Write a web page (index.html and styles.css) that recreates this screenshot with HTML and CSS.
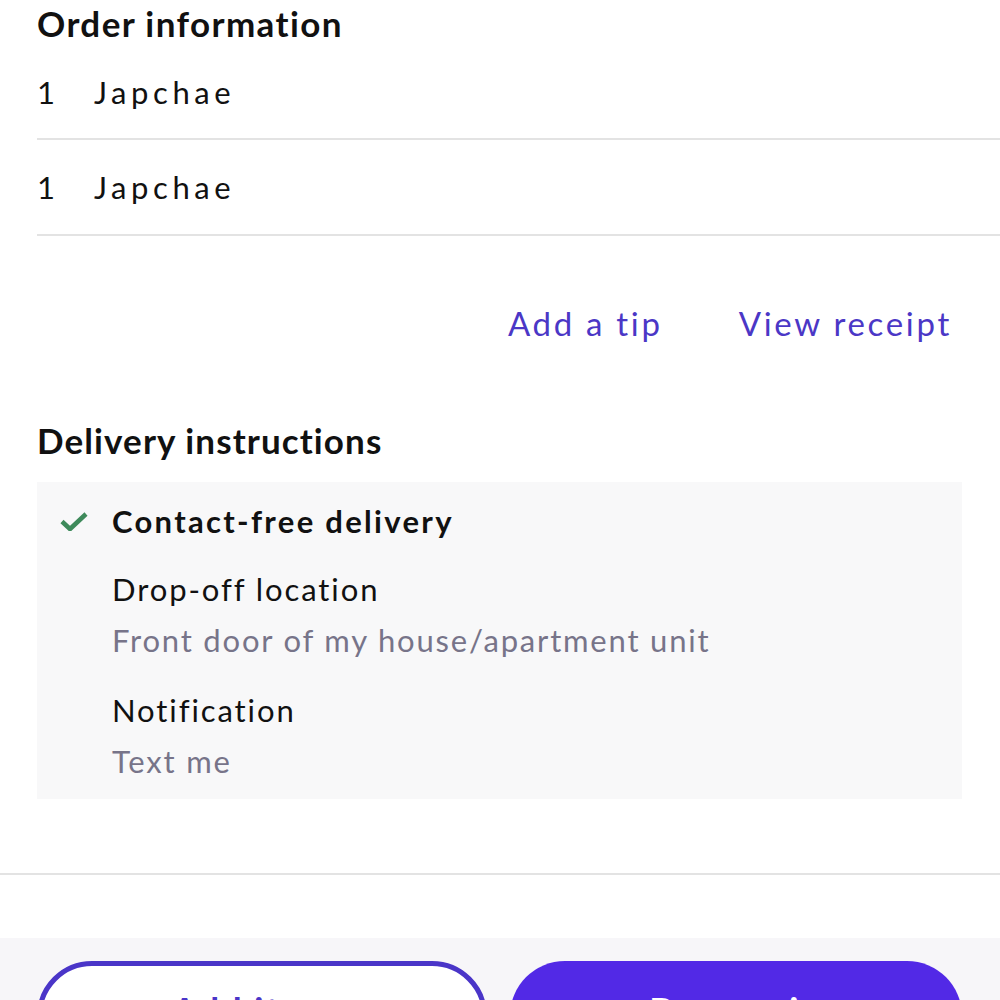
FILE: index.html
```html
<!DOCTYPE html>
<html lang="en">

<head>
  <meta charset="UTF-8">
  <meta name="viewport" content="width=device-width, initial-scale=1.0">
  <title>Order details</title>
  <link rel="stylesheet" href="styles.css">
</head>

<body>

  <div class="page">

    <section class="order">
      <h2 class="title">Order information</h2>
      <div class="item">
        <span class="qty">1</span>
        <span class="name">Japchae</span>
      </div>
      <div class="item">
        <span class="qty">1</span>
        <span class="name">Japchae</span>
      </div>

      <div class="links">
        <a href="#" class="link">Add a tip</a>
        <a href="#" class="link">View receipt</a>
      </div>
    </section>

    <section class="delivery">
      <h2 class="title wide">Delivery instructions</h2>
      <div class="box">
        <div class="check-row">
          <svg class="check" width="28" height="20" viewBox="0 0 28 20">
            <path d="M2 10.5 L10 18 L26 3" fill="none" stroke="#3e8a5b" stroke-width="4.5" stroke-linejoin="round"/>
          </svg>
          <span class="check-label">Contact-free delivery</span>
        </div>
        <div class="field">
          <div class="field-label">Drop-off location</div>
          <div class="field-value">Front door of my house/apartment unit</div>
        </div>
        <div class="field">
          <div class="field-label">Notification</div>
          <div class="field-value">Text me</div>
        </div>
      </div>
    </section>

    <div class="footer">
      <button class="btn outline">Add items</button>
      <button class="btn filled">Buy again</button>
    </div>

  </div>

</body>

</html>
```

FILE: styles.css
```css
body {
  font-family: Lato, 'Open Sans', sans-serif;
  background-color: #fff;
  color: #111;
  margin: 0;
  height: 1000px;
  overflow: hidden;
}

.page {
  display: flex;
  flex-direction: column;
}

.title {
  font-size: 35px;
  font-weight: 700;
  margin: 0;
  line-height: 46px;
  padding-left: 37px;
  letter-spacing: 1.4px;
}

.title.wide {
  letter-spacing: 1.1px;
  line-height: 48px;
}

.item {
  display: flex;
  align-items: center;
  height: 94px;
  margin-left: 37px;
  border-bottom: 2px solid #e3e3e3;
  font-size: 31px;
}

.item:first-of-type {
  height: 92px;
}

.qty {
  width: 57px;
}

.name {
  letter-spacing: 4.6px;
}

.links {
  display: flex;
  justify-content: flex-end;
  gap: 76px;
  padding: 67px 48px 0 0;
  height: 113px;
}

.link {
  color: #4b37c6;
  text-decoration: none;
  font-size: 33px;
  letter-spacing: 2.7px;
}

.box {
  background-color: #f8f8f9;
  margin: 18px 38px 0 37px;
  padding: 19px 0 0 23px;
  height: 317px;
  box-sizing: border-box;
}

.check-row {
  display: flex;
  align-items: center;
  gap: 24px;
  height: 40px;
}

.check-label {
  font-size: 31px;
  font-weight: 700;
  letter-spacing: 2.3px;
}

.field {
  padding-left: 52px;
  margin-top: 25px;
}

.field + .field {
  margin-top: 19px;
}

.field-label {
  font-size: 31px;
  line-height: 46px;
  letter-spacing: 1.9px;
}

.field-value {
  font-size: 31px;
  line-height: 56px;
  color: #777489;
  letter-spacing: 1.8px;
}

.footer {
  margin-top: 74px;
  border-top: 2px solid #e3e3e3;
  padding-top: 63px;
  background: linear-gradient(#fff 0, #fff 63px, #f7f6f9 63px);
  display: flex;
  gap: 23px;
  padding-left: 37px;
}

.btn {
  height: 110px;
  margin-top: 23px;
  border-radius: 55px;
  font-family: Lato, sans-serif;
  font-size: 36px;
  font-weight: 700;
  letter-spacing: 2px;
  padding: 0 0 12px;
  align-self: flex-start;
}

.outline {
  width: 450px;
  background-color: #fff;
  border: 5px solid #4a35c8;
  color: #4a35c8;
}

.filled {
  width: 452px;
  background-color: #5229e6;
  border: none;
  color: #fff;
}
```
